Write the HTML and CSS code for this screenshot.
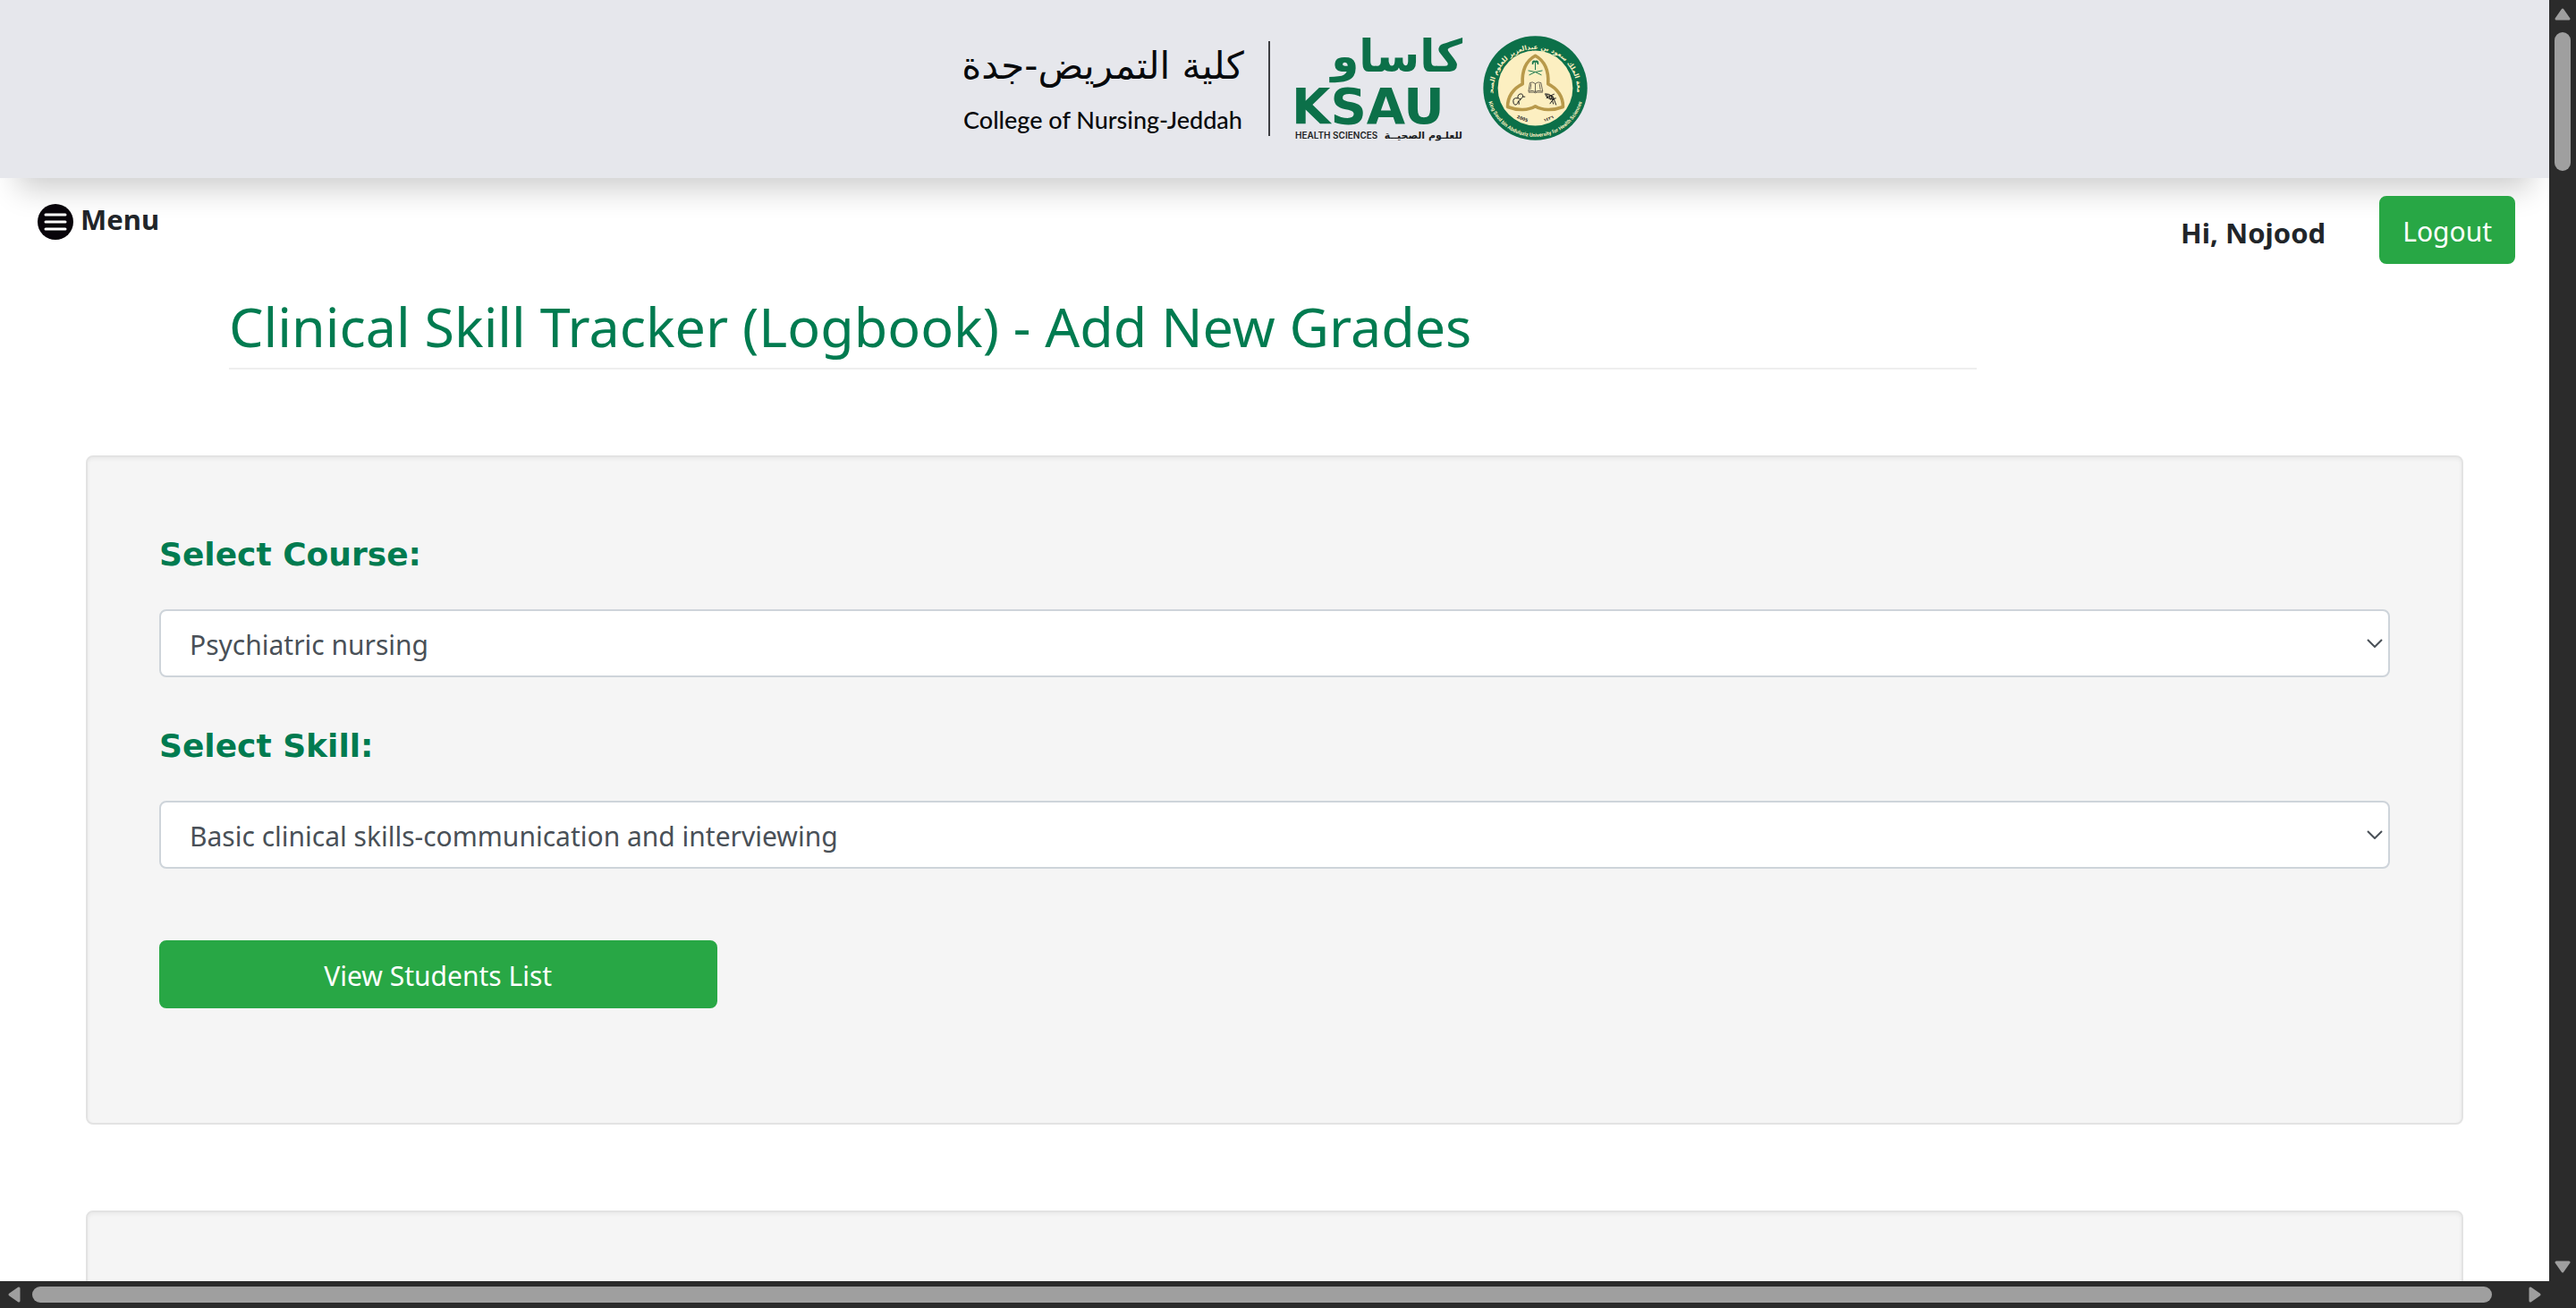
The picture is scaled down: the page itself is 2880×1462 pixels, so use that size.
FILE: index.html
```html
<!DOCTYPE html>
<html lang="en">
<head>
<meta charset="utf-8">
<meta name="viewport" content="width=device-width, initial-scale=1">
<title>Clinical Skill Tracker (Logbook) - Add New Grades</title>
<link rel="stylesheet" href="styles.css">
</head>
<body>
<div class="shell">
  <div class="viewport">
    <header class="banner">
      <svg class="logo" viewBox="0 0 704 120" role="img" aria-label="KSAU Health Sciences, College of Nursing-Jeddah">
        <text class="college-ar" x="160" y="50" text-anchor="middle" direction="rtl">كلية التمريض-جدة</text>
        <text class="college-en" x="160" y="106" text-anchor="middle">College of Nursing-Jeddah</text>
        <rect x="345" y="8" width="2" height="106" fill="#3d3e42"/>
        <text class="mark-ar" x="562" y="42" text-anchor="start" direction="rtl">كاساو</text>
        <text class="mark-en" x="371" y="100">KSAU</text>
        <text class="tag-en" x="375" y="117">HEALTH SCIENCES</text>
        <text class="tag-ar" x="562" y="117" text-anchor="start" direction="rtl">للعلـوم الصحيــة</text>
        <!-- University seal -->
        <svg x="585" y="2" width="117" height="117" viewBox="23 29 352 352">
          <defs>
            <path id="arc-top" d="M58 215A141 141 0 1 1 340 215"/>
            <path id="arc-bottom" d="M35 205A164 164 0 0 0 363 205"/>
          </defs>
          <circle cx="199" cy="205" r="175" fill="#0c7049"/>
          <circle cx="199" cy="205" r="126" fill="#fcefc1"/>
          <text class="seal-ar" text-anchor="middle" direction="rtl"><textPath href="#arc-top" startOffset="50%">جامعة الملك سعود بن عبدالعزيز للعلوم الصحية</textPath></text>
          <text class="seal-en" text-anchor="middle"><textPath href="#arc-bottom" startOffset="50%">King Saud bin Abdulaziz University for Health Sciences</textPath></text>
          <path d="M199 96C172 111 153 140 156 191C124 206 105 236 106 268C140 281 176 280 199 266C222 280 258 281 292 268C293 236 274 206 242 191C245 140 226 111 199 96Z" fill="none" stroke="#b8994a" stroke-width="11" stroke-linejoin="round"/>
          <g fill="none" stroke="#1f7a4f" stroke-width="3">
            <path d="M199 118V144M175 146Q200 148 220 161M223 146Q198 148 178 161"/>
            <path d="M190 125Q190 114 199 116Q208 114 208 125M189 119Q194 111 199 116Q204 111 209 119" stroke-width="5"/>
          </g>
          <g fill="none" stroke="#222" stroke-width="2">
            <path d="M199 190Q189 182 181 187L176 216Q190 211 199 217Q208 211 224 216L218 187Q209 182 199 190V217M185 190L182 211M213 190L216 211M176 219H193L199 221L205 219H224"/>
            <path d="M144 226Q158 220 157 234Q150 247 141 239Q138 232 144 226M157 234H165M141 239Q120 235 126 257Q136 269 143 247M151 241Q140 250 144 260" stroke-width="3"/>
            <path d="M232 224Q258 222 269 262M236 239Q250 229 263 225M232 224Q238 248 269 239M251 228L260 259M245 226L250 245M238 225L242 239M256 230L263 244M264 240Q254 246 248 258" stroke-width="3"/>
          </g>
          <text class="seal-year" transform="translate(154 312) rotate(20)" text-anchor="middle">2005</text>
          <text class="seal-year" transform="translate(245 312) rotate(-20)" text-anchor="middle">١٤٢٦</text>
        </svg>
      </svg>
    </header>

    <nav class="topbar">
      <button class="menu" type="button">
        <svg class="menu-icon" viewBox="0 0 40 40" aria-hidden="true">
          <circle cx="20" cy="20" r="20" fill="#08040a"/>
          <path d="M9 12H31M9 20H31M9 28H31" stroke="#fff" stroke-width="3" stroke-linecap="round"/>
        </svg>
        Menu
      </button>
      <div class="account">
        <strong class="greeting">Hi, Nojood</strong>
        <button class="btn" type="button">Logout</button>
      </div>
    </nav>

    <main>
      <h1 class="title">Clinical Skill Tracker (Logbook) - Add New Grades</h1>
      <form class="panel">
        <label class="label" for="course">Select Course:</label>
        <div class="field">
          <select class="select" id="course"><option>Psychiatric nursing</option></select>
          <svg class="chevron" viewBox="0 0 18 10" aria-hidden="true"><path d="M1 1L9 9L17 1"/></svg>
        </div>
        <label class="label" for="skill">Select Skill:</label>
        <div class="field">
          <select class="select" id="skill"><option>Basic clinical skills-communication and interviewing</option></select>
          <svg class="chevron" viewBox="0 0 18 10" aria-hidden="true"><path d="M1 1L9 9L17 1"/></svg>
        </div>
        <button class="btn btn-view" type="button">View Students List</button>
      </form>
      <section class="panel"></section>
    </main>
  </div>

  <div class="bar bar-y" aria-hidden="true">
    <svg class="arrow" viewBox="0 0 18 14"><path d="M9 2L16 12H2Z"/></svg>
    <div class="track"><div class="thumb"></div></div>
    <svg class="arrow" viewBox="0 0 18 14"><path d="M9 12L16 2H2Z"/></svg>
  </div>
  <div class="bar bar-x" aria-hidden="true">
    <svg class="arrow" viewBox="0 0 14 18"><path d="M2 9L12 2V16Z"/></svg>
    <div class="track"><div class="thumb"></div></div>
    <svg class="arrow" viewBox="0 0 14 18"><path d="M12 9L2 2V16Z"/></svg>
  </div>
  <div class="corner"></div>
</div>
</body>
</html>
```
FILE: styles.css
```css
* {
  box-sizing: border-box;
}

body {
  margin: 0;
  color: #212529;
  font: 30px/48px "Noto Sans", "Open Sans", sans-serif;
}

button,
select {
  font: inherit;
}

.shell {
  display: grid;
  grid-template: minmax(0, 1fr) 30px / minmax(0, 1fr) 30px;
  height: 100vh;
}

.viewport {
  overflow: hidden;
  background: #fff;
}

/* Banner and logo */
.banner {
  display: flex;
  justify-content: center;
  padding: 38px 0 41px;
  background: #e6e7ec;
  box-shadow: 0 32px 32px -20px rgba(0, 0, 0, 0.2);
}

.logo {
  width: 704px;
  height: 120px;
  overflow: visible;
}

.college-ar {
  font: 42px "DejaVu Sans", sans-serif;
  fill: #080a0c;
}

.college-en {
  font: 500 27px Lato, sans-serif;
  fill: #080a0c;
}

.mark-ar {
  font: bold 50px "DejaVu Sans", sans-serif;
  fill: #0c7049;
}

.mark-en {
  font: bold 56px "DejaVu Sans", sans-serif;
  fill: #0c7049;
}

.tag-en {
  font: 600 10px Inter, sans-serif;
  fill: #1d1e22;
}

.tag-ar {
  font: bold 11px "DejaVu Sans", sans-serif;
  fill: #1d1e22;
}

.seal-ar {
  font: bold 22px "DejaVu Sans", sans-serif;
  fill: #fcefc1;
}

.seal-en {
  font: bold 17px Roboto, sans-serif;
  fill: #fcefc1;
}

.seal-year {
  font: bold 14px "DejaVu Sans", sans-serif;
  fill: #222;
}

/* Menu and account row */
.topbar {
  display: flex;
  justify-content: space-between;
  align-items: flex-start;
  padding: 20px 38px 0 42px;
}

.menu {
  display: flex;
  align-items: flex-start;
  gap: 8px;
  padding: 9px 0;
  border: 0;
  background: none;
  color: inherit;
  font-size: 31px;
  font-weight: bold;
  line-height: 34px;
}

.menu-icon {
  width: 40px;
  height: 40px;
}

.account {
  display: flex;
  align-items: center;
  gap: 60px;
}

.greeting {
  padding-top: 6px;
  font-size: 31px;
}

.btn {
  padding: 14px 24px 10px;
  border: 2px solid #28a745;
  border-radius: 8px;
  background: #28a745;
  color: #fff;
}

/* Page content */
.title {
  margin: 32px 640px 96px 256px;
  padding-bottom: 8px;
  border-bottom: 2px solid #eee;
  color: #007b50;
  font-size: 61px;
  font-weight: 400;
  line-height: 76px;
}

.panel {
  min-height: 240px;
  margin: 0 96px 96px;
  padding: 82px 80px 128px;
  border: 2px solid #e3e3e3;
  border-radius: 8px;
  background: #f5f5f5;
  box-shadow: inset 0 2px 4px rgba(0, 0, 0, 0.05);
}

.label {
  display: block;
  margin-bottom: 34px;
  color: #007b50;
  font: bold 36px/54px "DejaVu Sans", sans-serif;
}

.field {
  display: grid;
  align-items: center;
  margin-bottom: 50px;
}

.select {
  grid-area: 1 / 1;
  width: 100%;
  padding: 14px 32px 10px;
  border: 2px solid #ced4da;
  border-radius: 8px;
  background: #fff;
  color: #495057;
  appearance: none;
}

.chevron {
  grid-area: 1 / 1;
  justify-self: end;
  width: 18px;
  height: 10px;
  margin-right: 8px;
  fill: none;
  stroke: #495057;
  stroke-width: 2;
  pointer-events: none;
}

.btn-view {
  width: 25%;
  margin-top: 30px;
}

/* Scroll bars */
.bar {
  display: flex;
  background: #2b2b2b;
}

.bar-y {
  flex-direction: column;
  padding: 9px 6px;
}

.bar-x {
  padding: 6px 9px;
}

.arrow {
  flex: none;
  fill: #9f9f9f;
  stroke: #9f9f9f;
  stroke-width: 3;
  stroke-linejoin: round;
}

.bar-y .arrow {
  width: 18px;
  height: 14px;
}

.bar-x .arrow {
  width: 14px;
  height: 18px;
}

.track {
  display: flex;
  flex: 1;
}

.bar-y .track {
  flex-direction: column;
  margin: 13px 0;
}

.bar-x .track {
  margin: 0 13px;
}

.thumb {
  border-radius: 9px;
  background: #9f9f9f;
}

.bar-y .thumb {
  height: 155px;
}

.bar-x .thumb {
  width: 99%;
}

.corner {
  background: #2b2b2b;
}
```
